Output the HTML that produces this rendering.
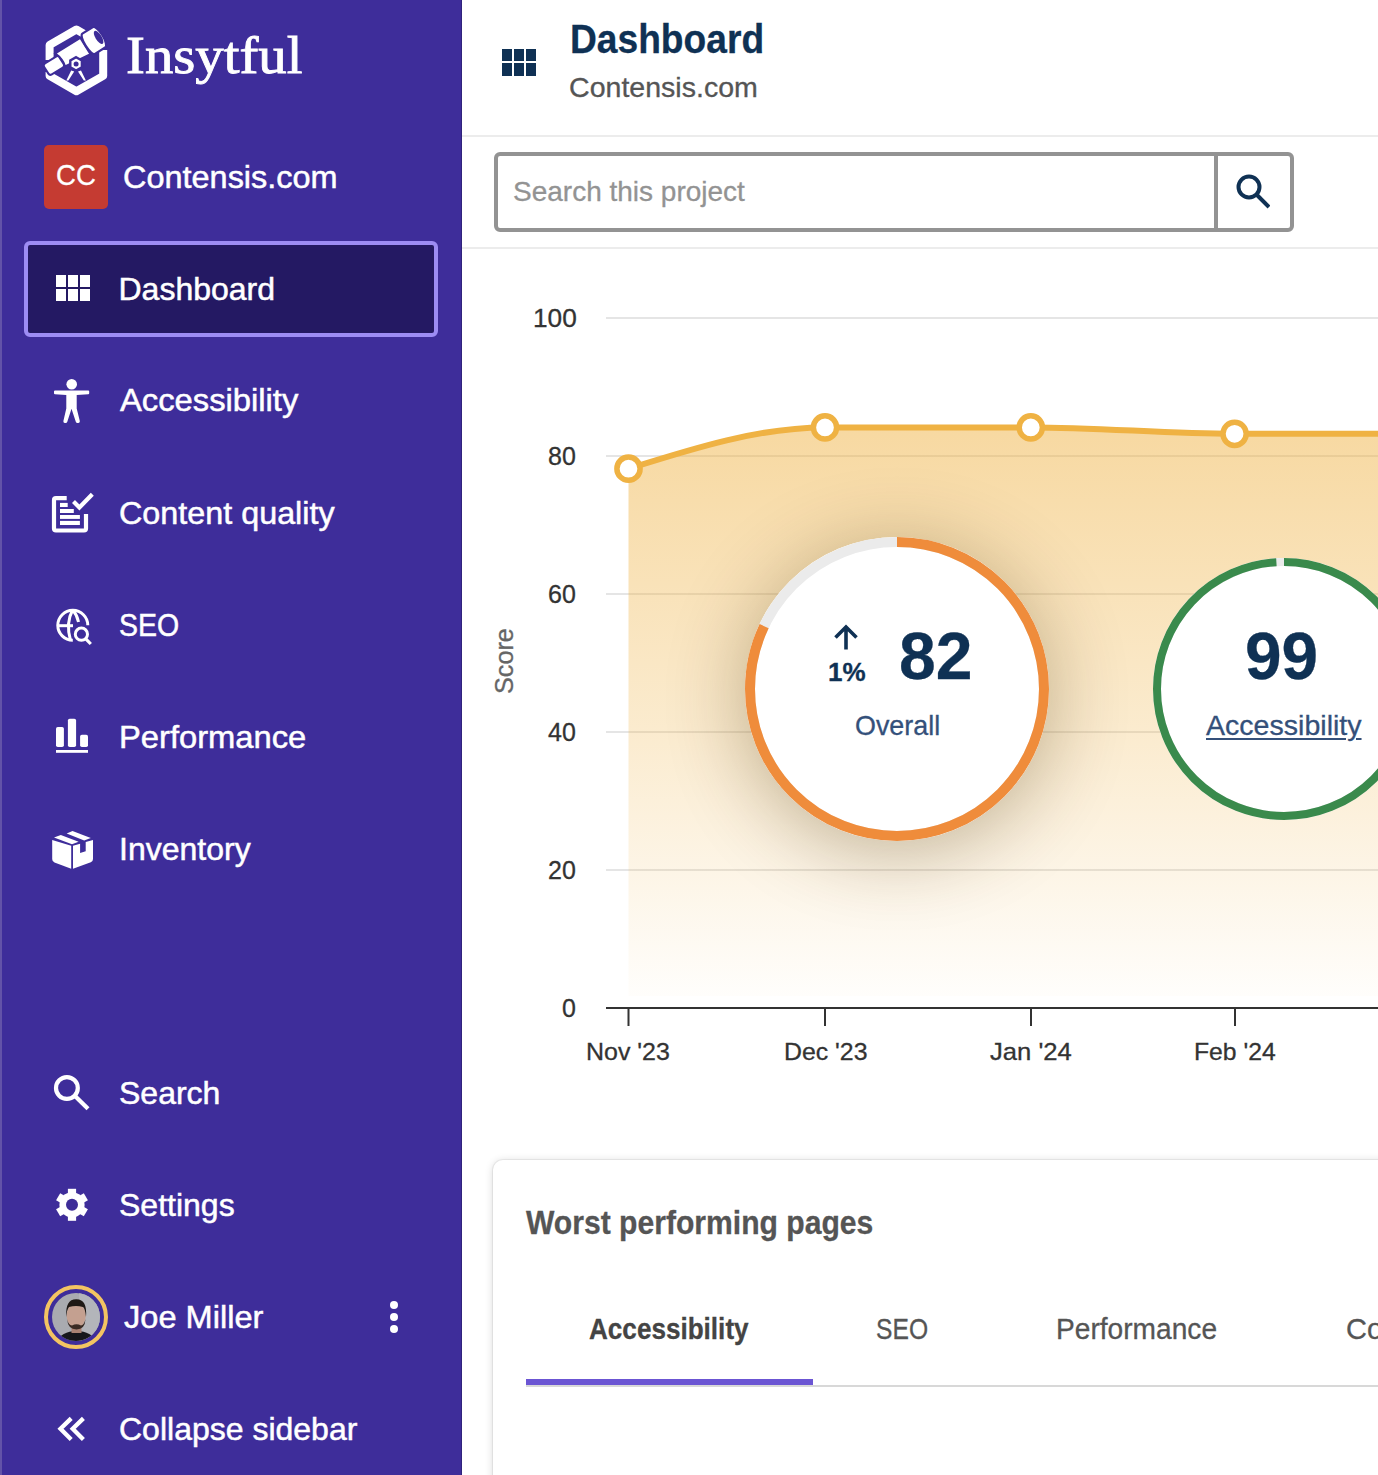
<!DOCTYPE html>
<html><head><meta charset="utf-8">
<style>
html,body{margin:0;padding:0;}
body{width:1378px;height:1475px;overflow:hidden;position:relative;background:#fff;font-family:"Liberation Sans",sans-serif;}
.a{position:absolute;}
.t{position:absolute;white-space:nowrap;line-height:1;transform-origin:0 0;-webkit-text-stroke:0.3px currentColor;}
#sb{left:0;top:0;width:462px;height:1475px;background:#3e2d9a;}
.nav{color:#fff;font-size:32px;-webkit-text-stroke:0.5px #fff;}
</style></head><body>
<!-- SIDEBAR -->
<div id="sb" class="a"></div>
<div class="a" style="left:0;top:0;width:2px;height:1475px;background:#6353a8"></div>
<div class="a" style="left:461px;top:0;width:1px;height:1475px;background:#30237c"></div>

<!-- logo -->
<svg class="a" style="left:40px;top:20px" width="72" height="80" viewBox="0 0 72 80">
  <path d="M9.6 40 V25 L36.4 9.5 L45 14.5" fill="none" stroke="#fff" stroke-width="8" stroke-linejoin="round"/>
  <path d="M63.2 30 V55.9 L36.4 71.3 L9.6 55.9 V52" fill="none" stroke="#fff" stroke-width="8" stroke-linejoin="round"/>
  <g transform="translate(7.05 49.6) rotate(-32)">
    <path d="M15.5 -9.4 L45 -9.4 L45 9.9 L17 6.8 Q19 0 15.5 -9.4 Z" fill="#fff" stroke="#3d2c98" stroke-width="2"/>
    <rect x="-1" y="-6.3" width="18" height="12.9" rx="2.5" fill="#fff" stroke="#3d2c98" stroke-width="2"/>
    <path d="M49 -11.8 L61 -11.8 A4.2 11.9 0 0 1 61 12 L49 12 A3.6 11.9 0 0 1 49 -11.8 Z" fill="#fff" stroke="#3d2c98" stroke-width="2.2"/>
    <ellipse cx="60.8" cy="0" rx="3.1" ry="7.6" fill="#3d2c98"/>
  </g>
  <path d="M31.2 50.5 L26.3 60.4 L28.4 60.4 L34.2 51.5 Z M41 50.5 L45.9 60.4 L43.8 60.4 L38 51.5 Z" fill="#fff"/>
  <polygon points="36.1,37.2 41.9,40.55 41.9,47.25 36.1,50.6 30.3,47.25 30.3,40.55" fill="#fff" stroke="#3d2c98" stroke-width="2.4"/>
  <circle cx="36.1" cy="43.9" r="2.5" fill="#3d2c98"/>
</svg>
<div class="t" style="left:126px;top:29px;font-family:'Liberation Serif',serif;font-size:53px;color:#fff;-webkit-text-stroke:0.9px #fff;transform:scaleX(1.07)">Insytful</div>

<!-- project -->
<div class="a" style="left:44px;top:145px;width:64px;height:64px;background:#c53b32;border-radius:5px"></div>
<div class="t" style="left:56px;top:160px;font-size:30px;color:#fff;letter-spacing:0px;transform:scaleX(0.92)">CC</div>
<div class="t nav" style="left:123px;top:161px;transform:scaleX(1.014)">Contensis.com</div>

<!-- active dashboard -->
<div class="a" style="left:24px;top:241px;width:406px;height:88px;border:4px solid #9d8cf4;border-radius:6px;background:#241963"></div>
<svg class="a" style="left:55px;top:274px" width="36" height="28" viewBox="0 0 36 28">
  <g fill="#fff"><rect x="1" y="1" width="10" height="12"/><rect x="13" y="1" width="10" height="12"/><rect x="25" y="1" width="10" height="12"/>
  <rect x="1" y="15" width="10" height="12"/><rect x="13" y="15" width="10" height="12"/><rect x="25" y="15" width="10" height="12"/></g>
</svg>
<div class="t nav" style="left:118.5px;top:273px">Dashboard</div>

<!-- accessibility -->
<svg class="a" style="left:40px;top:365px" width="70" height="70" viewBox="0 0 70 70">
  <circle cx="31.7" cy="19.2" r="5.3" fill="#fff"/>
  <path d="M14 26.5 Q14 25.6 15 25.6 L48.3 25.6 Q49.2 25.6 49.2 26.5 L49.2 28.3 Q49.2 29.2 48.3 29.2 L36.7 30 L36.7 43.5 L39.8 56 Q40.2 57.7 38.5 57.9 L37.5 58 Q36.2 58 35.8 56.8 L31.5 43.8 L27.3 56.8 Q26.9 58 25.6 58 L24.6 57.9 Q23 57.7 23.4 56 L26.3 43.5 L26.3 30 L15 29.2 Q14 29.2 14 28.3 Z" fill="#fff"/>
</svg>
<div class="t nav" style="left:120px;top:384px;transform:scaleX(1.023)">Accessibility</div>

<!-- content quality -->
<svg class="a" style="left:40px;top:478px" width="70" height="70" viewBox="0 0 70 70">
  <path d="M26.7 20.2 H16 Q14 20.2 14 22.2 V50.5 Q14 52.5 16 52.5 H44 Q46 52.5 46 50.5 V36" fill="none" stroke="#fff" stroke-width="4.2"/>
  <g fill="#fff"><rect x="20" y="24.9" width="7.7" height="4.1"/><rect x="20" y="31" width="13.8" height="4"/><rect x="20" y="37" width="19.9" height="3.9"/><rect x="20" y="42.9" width="19.9" height="4.1"/></g>
  <path d="M33.5 23.6 L39.4 29.5 L52.3 16.3" fill="none" stroke="#fff" stroke-width="4.2"/>
</svg>
<div class="t nav" style="left:119px;top:497px;transform:scaleX(1.01)">Content quality</div>

<!-- seo -->
<svg class="a" style="left:40px;top:590px" width="70" height="70" viewBox="0 0 70 70">
  <path d="M47.8 35.3 A15 15 0 1 0 32.8 50.3" fill="none" stroke="#fff" stroke-width="3"/>
  <path d="M32.5 20.3 Q25.5 33 30.5 50.5" fill="none" stroke="#fff" stroke-width="3"/>
  <path d="M33 20.3 Q37 25 38.5 32" fill="none" stroke="#fff" stroke-width="3"/>
  <path d="M17.5 35.7 H33" fill="none" stroke="#fff" stroke-width="3"/>
  <circle cx="41.4" cy="44.2" r="6.1" fill="none" stroke="#fff" stroke-width="3"/>
  <path d="M45.8 48.8 L50.8 54" stroke="#fff" stroke-width="3.2"/>
</svg>
<div class="t nav" style="left:119px;top:609px;transform:scaleX(0.89)">SEO</div>

<!-- performance -->
<svg class="a" style="left:40px;top:702px" width="70" height="70" viewBox="0 0 70 70">
  <g fill="#fff"><rect x="16" y="24.9" width="7.9" height="20.1" rx="1.8"/><rect x="27.9" y="16.8" width="8.2" height="28.2" rx="1.8"/><rect x="40.1" y="32.8" width="7.9" height="12.2" rx="1.8"/><rect x="16" y="48" width="32" height="2.8"/></g>
</svg>
<div class="t nav" style="left:118.5px;top:721px;transform:scaleX(1.022)">Performance</div>

<!-- inventory -->
<svg class="a" style="left:40px;top:814px" width="70" height="70" viewBox="0 0 70 70">
  <g fill="#fff">
    <path d="M12.2 25.9 L31.2 31.7 V54.8 L14.5 48.5 Q12.2 47.6 12.2 45 Z"/>
    <path d="M33 31.7 L40.1 29.64 V38.9 L45.7 37.3 V28 L53 25.9 V45 Q53 47.5 50.8 48.3 L33 54.8 Z"/>
    <path d="M14 23.4 L20.8 21 L38.6 27.7 L32 30.2 Z"/>
    <path d="M26.7 19.6 L32.5 17 L50.8 23.9 L44.2 26.4 Z"/>
  </g>
</svg>
<div class="t nav" style="left:119px;top:833px">Inventory</div>

<!-- search -->
<svg class="a" style="left:40px;top:1058px" width="70" height="70" viewBox="0 0 70 70">
  <circle cx="26.9" cy="30" r="10.9" fill="none" stroke="#fff" stroke-width="4.2"/>
  <path d="M35 38 L48 50.8" stroke="#fff" stroke-width="4.2"/>
</svg>
<div class="t nav" style="left:119px;top:1077px">Search</div>

<!-- settings -->
<svg class="a" style="left:40px;top:1170px" width="70" height="70" viewBox="0 0 70 70">
  <g transform="translate(32 34.8)" fill="#fff">
    <circle r="12.6"/>
    <rect x="-4.1" y="-16" width="8.2" height="32"/>
    <rect x="-4.1" y="-16" width="8.2" height="32" transform="rotate(60)"/>
    <rect x="-4.1" y="-16" width="8.2" height="32" transform="rotate(-60)"/>
    <circle r="6" fill="#3d2c98"/>
  </g>
</svg>
<div class="t nav" style="left:119px;top:1189px">Settings</div>

<!-- user -->
<svg class="a" style="left:35px;top:1275px" width="82" height="84" viewBox="0 0 82 84">
  <defs><clipPath id="av"><circle cx="41" cy="42" r="24"/></clipPath></defs>
  <circle cx="41" cy="42" r="30" fill="none" stroke="#f3c462" stroke-width="4"/>
  <g clip-path="url(#av)">
    <rect x="0" y="0" width="82" height="84" fill="#a9abb0"/>
    <rect x="44" y="0" width="40" height="84" fill="#b3b5ba"/>
    <ellipse cx="41.5" cy="66" rx="18" ry="10" fill="#16171b"/>
    <rect x="36.5" y="49" width="10" height="9" fill="#a98273"/>
    <ellipse cx="41.2" cy="40.5" rx="9.6" ry="12.8" fill="#c4a090"/>
    <path d="M31.3 42 Q30 24 41.5 24.3 Q52.5 24.5 51 42 Q50 33 48 32 Q41 30 34 32 Q32 34 31.3 42Z" fill="#1f1915"/>
    <path d="M32 44 Q33 54.5 41.5 54.5 Q50 54.5 50.5 44 Q49 50 46 50.5 Q41.5 48 37 50.5 Q33.5 50 32 44Z" fill="#3a2b24"/>
  </g>
</svg>
<div class="t nav" style="left:123.5px;top:1301px;transform:scaleX(1.018)">Joe Miller</div>
<svg class="a" style="left:384px;top:1297px" width="20" height="40" viewBox="0 0 20 40">
  <g fill="#fff"><circle cx="10" cy="8" r="4"/><circle cx="10" cy="20" r="4"/><circle cx="10" cy="32" r="4"/></g>
</svg>

<!-- collapse -->
<svg class="a" style="left:40px;top:1394px" width="70" height="70" viewBox="0 0 70 70">
  <path d="M31.2 24.4 L20.5 34.8 L31.2 45.5 M43.4 24.4 L32.7 34.8 L43.4 45.5" fill="none" stroke="#fff" stroke-width="4.3"/>
</svg>
<div class="t nav" style="left:119px;top:1413px">Collapse sidebar</div>

<!-- MAIN HEADER -->
<svg class="a" style="left:501px;top:49px" width="36" height="28" viewBox="0 0 36 28">
  <g fill="#0f3154"><rect x="1" y="0" width="10" height="12"/><rect x="13" y="0" width="10" height="12"/><rect x="25" y="0" width="10" height="12"/>
  <rect x="1" y="14" width="10" height="13"/><rect x="13" y="14" width="10" height="13"/><rect x="25" y="14" width="10" height="13"/></g>
</svg>
<div class="t" style="left:570px;top:19px;font-size:40px;font-weight:700;color:#0f3154;transform:scaleX(0.929)">Dashboard</div>
<div class="t" style="left:569px;top:74px;font-size:28px;color:#555;transform:scaleX(1.02)">Contensis.com</div>
<div class="a" style="left:462px;top:135px;width:916px;height:2px;background:#ececec"></div>

<!-- search bar -->
<div class="a" style="left:494px;top:152px;width:792px;height:72px;border:4px solid #939393;border-radius:6px;background:#fff"></div>
<div class="a" style="left:1214px;top:152px;width:4px;height:80px;background:#939393"></div>
<div class="t" style="left:513px;top:178px;font-size:28px;color:#939393">Search this project</div>
<svg class="a" style="left:1230px;top:168px" width="40" height="44" viewBox="0 0 40 44">
  <circle cx="19" cy="19" r="10.5" fill="none" stroke="#0f3154" stroke-width="4"/>
  <path d="M26.5 26.5 L39 39" stroke="#0f3154" stroke-width="4"/>
</svg>
<div class="a" style="left:462px;top:247px;width:916px;height:2px;background:#ececec"></div>

<!-- CHART -->
<svg class="a" style="left:0;top:0" width="1378" height="1160" viewBox="0 0 1378 1160">
  <defs>
    <linearGradient id="fg" x1="0" y1="427" x2="0" y2="996" gradientUnits="userSpaceOnUse">
      <stop offset="0" stop-color="#efb243" stop-opacity="0.5"/>
      <stop offset="0.55" stop-color="#efb243" stop-opacity="0.25"/>
      <stop offset="1" stop-color="#efb243" stop-opacity="0.02"/>
    </linearGradient>
  </defs>
  <g fill="#e5e5e5">
    <rect x="606" y="317" width="772" height="2"/>
    <rect x="606" y="455" width="772" height="2"/>
    <rect x="606" y="593" width="772" height="2"/>
    <rect x="606" y="731" width="772" height="2"/>
    <rect x="606" y="869" width="772" height="2"/>
  </g>
  <path d="M628.5 468.7 C694 448.05 759.5 427.4 825 427.4 L1030.8 427.4 C1098.7 427.4 1166.7 433.8 1234.6 433.8 L1400 433.8 L1400 996 L628.5 996 Z" fill="url(#fg)"/>
  <path d="M628.5 468.7 C694 448.05 759.5 427.4 825 427.4 L1030.8 427.4 C1098.7 427.4 1166.7 433.8 1234.6 433.8 L1400 433.8" fill="none" stroke="#efb243" stroke-width="6"/>
  <g fill="#fff" stroke="#efb243" stroke-width="5.5">
    <circle cx="628.5" cy="468.7" r="11.6"/>
    <circle cx="825" cy="427.4" r="11.6"/>
    <circle cx="1030.8" cy="427.4" r="11.6"/>
    <circle cx="1234.6" cy="433.8" r="11.6"/>
  </g>
  <rect x="606" y="1007" width="772" height="2" fill="#333"/>
  <g fill="#333">
    <rect x="627.5" y="1008" width="2" height="18"/>
    <rect x="824" y="1008" width="2" height="18"/>
    <rect x="1030" y="1008" width="2" height="18"/>
    <rect x="1234" y="1008" width="2" height="18"/>
  </g>
</svg>
<div class="t" style="left:533px;top:306px;font-size:25px;color:#333;transform:scaleX(1.05)">100</div>
<div class="t" style="left:548px;top:444px;font-size:25px;color:#333">80</div>
<div class="t" style="left:548px;top:582px;font-size:25px;color:#333">60</div>
<div class="t" style="left:548px;top:720px;font-size:25px;color:#333">40</div>
<div class="t" style="left:548px;top:858px;font-size:25px;color:#333">20</div>
<div class="t" style="left:562px;top:996px;font-size:25px;color:#333">0</div>
<div class="t" style="left:490.5px;top:693.5px;font-size:26px;color:#666;transform:rotate(-90deg) scaleX(0.97)">Score</div>
<div class="t" style="left:585.5px;top:1040px;font-size:24px;color:#333;transform:scaleX(1.04)">Nov '23</div>
<div class="t" style="left:783.5px;top:1040px;font-size:24px;color:#333;transform:scaleX(1.035)">Dec '23</div>
<div class="t" style="left:989.5px;top:1040px;font-size:24px;color:#333;transform:scaleX(1.067)">Jan '24</div>
<div class="t" style="left:1194px;top:1040px;font-size:24px;color:#333;transform:scaleX(1.03)">Feb '24</div>

<!-- score circle 1 -->
<div class="a" style="left:745px;top:537px;width:304px;height:304px;border-radius:50%;box-shadow:0 10px 80px rgba(70,45,0,0.33)"></div>
<svg class="a" style="left:745px;top:537px" width="304" height="304" viewBox="0 0 304 304">
  <circle cx="152" cy="152" r="152" fill="#fff"/>
  <circle cx="152" cy="152" r="147" fill="none" stroke="#ebebeb" stroke-width="10"/>
  <circle cx="152" cy="152" r="147" fill="none" stroke="#ef8c3b" stroke-width="10" stroke-dasharray="757.4 1000" transform="rotate(-90 152 152)"/>
</svg>
<svg class="a" style="left:830px;top:622px" width="32" height="32" viewBox="0 0 32 32">
  <path d="M16 27.5 V5 M5.5 15.5 L16 5 L26.5 15.5" fill="none" stroke="#0f3154" stroke-width="3.6"/>
</svg>
<div class="t" style="left:828px;top:659px;font-size:26px;font-weight:700;color:#0f3154">1%</div>
<div class="t" style="left:898.5px;top:622px;font-size:67px;font-weight:700;color:#0f3154;transform:scaleX(0.985)">82</div>
<div class="t" style="left:854.5px;top:712px;font-size:28px;color:#34507a;transform:scaleX(0.96)">Overall</div>

<!-- score circle 2 -->
<svg class="a" style="left:1153px;top:558px" width="262" height="262" viewBox="0 0 262 262">
  <circle cx="131" cy="131" r="131" fill="#fff"/>
  <circle cx="131" cy="131" r="127" fill="none" stroke="#ebebeb" stroke-width="8"/>
  <circle cx="131" cy="131" r="127" fill="none" stroke="#3a8a4c" stroke-width="8" stroke-dasharray="790 1000" transform="rotate(-90 131 131)"/>
</svg>
<div class="t" style="left:1245px;top:622px;font-size:67px;font-weight:700;color:#0f3154;transform:scaleX(0.98)">99</div>
<div class="t" style="left:1206px;top:712px;font-size:28px;color:#34507a;transform:scaleX(1.02);text-decoration:underline;text-decoration-thickness:2px;text-underline-offset:3px">Accessibility</div>

<!-- CARD -->
<div class="a" style="left:493px;top:1160px;width:1000px;height:400px;border-radius:10px;background:#fff;box-shadow:0 0 0 1px rgba(0,0,0,0.05),0 1px 8px rgba(0,0,0,0.16)"></div>
<div class="t" style="left:526px;top:1206px;font-size:33px;font-weight:700;color:#555;transform:scaleX(0.912)">Worst performing pages</div>
<div class="t" style="left:589px;top:1315px;font-size:29px;font-weight:700;color:#444;transform:scaleX(0.9)">Accessibility</div>
<div class="t" style="left:876px;top:1315px;font-size:29px;color:#555;transform:scaleX(0.85)">SEO</div>
<div class="t" style="left:1056px;top:1315px;font-size:29px;color:#555;transform:scaleX(0.97)">Performance</div>
<div class="t" style="left:1346px;top:1315px;font-size:29px;color:#555">Co</div>
<div class="a" style="left:526px;top:1385px;width:852px;height:2px;background:#d8d8d8"></div>
<div class="a" style="left:526px;top:1379px;width:287px;height:6px;background:#6b55d3"></div>
</body></html>
